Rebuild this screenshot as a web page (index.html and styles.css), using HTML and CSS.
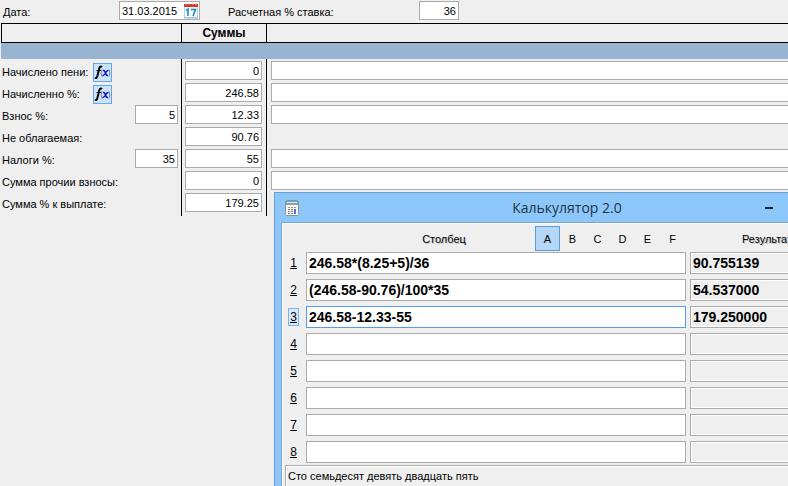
FILE: index.html
```html
<!DOCTYPE html>
<html lang="ru">
<head>
    <meta charset="UTF-8">
    <meta name="viewport" content="width=device-width, initial-scale=1.0">
    <title>Калькулятор 2.0</title>
    <link rel="stylesheet" href="styles.css">
</head>
<body>
    <form class="top-bar">
        <label class="date-label" for="date">Дата:</label>
        <div class="date-box">
            <input class="date-input" id="date" type="text" value="31.03.2015">
            <button class="date-button" type="button" aria-label="Календарь">
                <svg width="16" height="17" viewBox="0 0 16 17">
                    <rect x="1.5" y="3.500" width="13" height="12" fill="#f2f8fc" stroke="#b4d3e6"/>
                    <path d="M1 16h14" stroke="#8fb6cc"/>
                    <rect x="1" y="2" width="14" height="3" fill="#d23a28"/>
                    <path d="M3 1v2M6 1v2M10 1v2M13 1v2" stroke="#e9b5ae"/>
                    <path d="M3 8.500L5 7V14M8 7.500H12.500L10 14" fill="none" stroke="#1f86bd" stroke-width="1.500"/>
                </svg>
            </button>
        </div>
        <label class="rate-label" for="rate">Расчетная % ставка:</label>
        <input class="field rate-input" id="rate" type="text" value="36">
    </form>

    <table class="sums">
        <thead>
            <tr>
                <th class="col-name"></th>
                <th class="col-sum">Суммы</th>
                <th></th>
            </tr>
            <tr class="band">
                <td colspan="3"></td>
            </tr>
        </thead>
        <tbody>
            <tr>
                <td>
                    <div class="name">
                        <label for="peni">Начислено пени:</label>
                        <button class="fx" type="button" aria-label="Формула пени"><svg width="17" height="17" viewBox="0 0 17 17"><use href="#fx"/></svg></button>
                    </div>
                </td>
                <td><input class="field" id="peni" type="text" value="0"></td>
                <td><input class="field note" type="text" aria-label="Примечание"></td>
            </tr>
            <tr>
                <td>
                    <div class="name">
                        <label for="percent">Начисленно %:</label>
                        <button class="fx" type="button" aria-label="Формула процентов"><svg width="17" height="17" viewBox="0 0 17 17"><use href="#fx"/></svg></button>
                    </div>
                </td>
                <td><input class="field" id="percent" type="text" value="246.58"></td>
                <td><input class="field note" type="text" aria-label="Примечание"></td>
            </tr>
            <tr>
                <td>
                    <div class="name">
                        <label for="fee">Взнос %:</label>
                        <input class="field small" id="fee" type="text" value="5">
                    </div>
                </td>
                <td><input class="field" type="text" value="12.33" aria-label="Сумма взноса"></td>
                <td><input class="field note" type="text" aria-label="Примечание"></td>
            </tr>
            <tr>
                <td><div class="name"><label for="free">Не облагаемая:</label></div></td>
                <td><input class="field" id="free" type="text" value="90.76"></td>
                <td></td>
            </tr>
            <tr>
                <td>
                    <div class="name">
                        <label for="tax">Налоги %:</label>
                        <input class="field small" id="tax" type="text" value="35">
                    </div>
                </td>
                <td><input class="field" type="text" value="55" aria-label="Сумма налога"></td>
                <td><input class="field note" type="text" aria-label="Примечание"></td>
            </tr>
            <tr>
                <td><div class="name"><label for="other">Сумма прочии взносы:</label></div></td>
                <td><input class="field" id="other" type="text" value="0"></td>
                <td><input class="field note" type="text" aria-label="Примечание"></td>
            </tr>
            <tr class="last">
                <td><div class="name"><label for="payout">Сумма % к выплате:</label></div></td>
                <td><input class="field" id="payout" type="text" value="179.25"></td>
                <td></td>
            </tr>
        </tbody>
    </table>

    <section class="calc">
        <header class="calc-title">
            <svg class="calc-icon" width="14" height="16" viewBox="0 0 14 16">
                <rect x=".5" y=".5" width="13" height="15" rx="1" fill="#f4f4f4" stroke="#8c9299"/>
                <rect x="1" y="1" width="12" height="4" fill="#6fa9bd"/>
                <path d="M2 2.500h10" stroke="#d3edf0"/>
                <path d="M3 7.500h8" stroke="#d9884a" stroke-dasharray="2 1"/>
                <path d="M3 9.500h5M3 11.500h5M3 13.500h5" stroke="#777" stroke-dasharray="2 1"/>
                <path d="M10 9v5" stroke="#4b78d0" stroke-width="2"/>
            </svg>
            <h1>Калькулятор 2.0</h1>
            <button class="minimize" type="button" aria-label="Свернуть"></button>
        </header>
        <div class="calc-body">
            <div class="calc-head">
                <span class="head-column">Столбец</span>
                <div class="tabs">
                    <button class="tab active" type="button">A</button>
                    <button class="tab" type="button">B</button>
                    <button class="tab" type="button">C</button>
                    <button class="tab" type="button">D</button>
                    <button class="tab" type="button">E</button>
                    <button class="tab" type="button">F</button>
                </div>
                <span class="head-result">Результат</span>
            </div>
            <div class="lines">
                <label for="l1"><u>1</u></label>
                <input class="expr" id="l1" type="text" value="246.58*(8.25+5)/36">
                <input class="result" type="text" value="90.755139" aria-label="Результат 1" readonly>
                <label for="l2"><u>2</u></label>
                <input class="expr" id="l2" type="text" value="(246.58-90.76)/100*35">
                <input class="result" type="text" value="54.537000" aria-label="Результат 2" readonly>
                <label class="current" for="l3"><u>3</u></label>
                <input class="expr selected" id="l3" type="text" value="246.58-12.33-55">
                <input class="result" type="text" value="179.250000" aria-label="Результат 3" readonly>
                <label for="l4"><u>4</u></label>
                <input class="expr" id="l4" type="text">
                <input class="result" type="text" aria-label="Результат 4" readonly>
                <label for="l5"><u>5</u></label>
                <input class="expr" id="l5" type="text">
                <input class="result" type="text" aria-label="Результат 5" readonly>
                <label for="l6"><u>6</u></label>
                <input class="expr" id="l6" type="text">
                <input class="result" type="text" aria-label="Результат 6" readonly>
                <label for="l7"><u>7</u></label>
                <input class="expr" id="l7" type="text">
                <input class="result" type="text" aria-label="Результат 7" readonly>
                <label for="l8"><u>8</u></label>
                <input class="expr" id="l8" type="text">
                <input class="result" type="text" aria-label="Результат 8" readonly>
            </div>
            <div class="words">Сто семьдесят девять двадцать пять</div>
        </div>
    </section>

    <svg class="defs" width="0" height="0">
        <symbol id="fx" viewBox="0 0 17 17">
            <path d="M8 3C6.500 1.500 5.500 3 5 5.500L3.500 11.500C3 14 2 14.500 1 13.500" fill="none" stroke="#000" stroke-width="2"/>
            <path d="M2.500 6.500h5" stroke="#000"/>
            <path d="M8 5.500q-2 3.500 0 7M15 5.500q2 3.500 0 7" fill="none" stroke="#85859a"/>
            <path d="M9 6.500q1.500-.5 2.500 2.500t2.500 2.500M14.500 6.500q-1.500-.5-3 2.500t-3 2.500" fill="none" stroke="#1414c8" stroke-width="1.500"/>
        </symbol>
    </svg>
</body>
</html>
```
FILE: styles.css
```css
* {
    box-sizing: border-box;
}
body {
    position: relative;
    margin: 0;
    height: 100vh;
    overflow: hidden;
    background-color: #efefef;
    color: #000;
    font-family: "Liberation Sans", Arial, sans-serif;
    font-size: 11px;
}
input, button {
    margin: 0;
    padding: 0;
    font-family: inherit;
    font-size: inherit;
    color: inherit;
    border-radius: 0;
}
.defs {
    position: absolute;
}
.top-bar {
    display: flex;
    align-items: flex-start;
    height: 23px;
    padding: 1px 0 0 3px;
}
.top-bar label {
    line-height: 22px;
}
.date-label {
    width: 116px;
}
.date-box {
    display: flex;
    align-items: center;
    width: 81px;
    height: 19px;
    background: white;
    border: 1px solid #ababab;
}
.date-input {
    flex: 1;
    min-width: 0;
    padding-left: 2px;
    border: none;
    background: none;
}
.date-button {
    width: 16px;
    height: 17px;
    border: none;
    background: none;
}
.date-button svg, .fx svg {
    display: block;
}
.rate-label {
    width: 191px;
    margin-left: 28px;
}
.field {
    display: block;
    width: 77px;
    height: 19px;
    padding: 0 2px;
    background: white;
    border: 1px solid #ababab;
    text-align: right;
}
.rate-input {
    width: 40px;
}
.sums {
    width: calc(100% - 1px);
    margin-left: 1px;
    table-layout: fixed;
    border-collapse: separate;
    border-spacing: 0;
}
.sums th {
    height: 20px;
    padding: 0;
    font-size: 12px;
    border: 1px solid #000;
    border-right: none;
}
.col-name {
    width: 180px;
}
.col-sum {
    width: 85px;
}
.sums .band td {
    height: 16px;
    padding: 0;
    background-color: #99b4d1;
}
.sums tbody td {
    height: 22px;
    padding: 2px 0 1px 3px;
    border-left: 1px solid #000;
    vertical-align: top;
}
.sums tbody td:first-child {
    padding: 2px 3px 0 1px;
    border-left: none;
}
.sums tbody td:last-child {
    padding-left: 4px;
}
.sums .last td {
    height: 25px;
}
.name {
    display: flex;
    justify-content: space-between;
    height: 19px;
}
.name label {
    width: 91px;
    line-height: 22px;
    white-space: nowrap;
}
.small {
    width: 43px;
}
.fx {
    width: 19px;
    height: 19px;
    margin: 2px auto 0 0;
    background-color: #cce4fb;
    border: 1px solid #66a7e8;
}
.note {
    width: 100%;
    border-right: none;
    text-align: left;
}
.calc {
    position: absolute;
    top: 192px;
    left: 274px;
    width: 586px;
    padding: 0 6px 6px;
    background-color: #8dc7fa;
    border: 1px solid #6ba0d0;
}
.calc-title {
    display: flex;
    align-items: center;
    height: 29px;
}
.calc-icon {
    margin-left: 4px;
}
.calc-title h1 {
    flex: 1;
    margin: 0;
    padding-left: 70px;
    text-align: center;
    font-family: "Open Sans", sans-serif;
    font-size: 14px;
    font-weight: normal;
    color: #1e3448;
}
.minimize {
    width: 8px;
    height: 2px;
    margin-right: 80px;
    background: #1a2733;
    border: none;
}
.calc-body {
    padding: 2px 3px 3px;
    background-color: #efefef;
    border: 1px solid #78a9d6;
    box-shadow: inset 1px 1px #fff;
}
.calc-head {
    display: grid;
    grid-template-columns: 250px 150px 1fr;
    align-items: center;
    height: 27px;
    text-align: center;
}
.calc-head span {
    text-shadow: 1px 1px #c8c8c8;
}
.head-column {
    padding-left: 68px;
}
.tabs {
    display: flex;
}
.tab {
    width: 25px;
    height: 25px;
    background: none;
    border: 1px solid transparent;
}
.active {
    background-color: #b5d6f6;
    border-color: #5b9bd8;
}
.lines {
    display: grid;
    grid-template-columns: 17px 380px 1fr;
    gap: 5px 4px;
    align-items: center;
    padding-right: 6px;
}
.lines label {
    justify-self: center;
    padding: 1px;
    border: 1px solid transparent;
    font-size: 12px;
}
.lines .current {
    background-color: #d9eafb;
    border-color: #7db4ea;
}
.expr, .result {
    width: 100%;
    height: 22px;
    padding: 0 2px;
    background: white;
    border: 1px solid #ababab;
    font-size: 14px;
    font-weight: bold;
}
.result {
    background-color: #efefef;
    box-shadow: inset 0 0 0 1px #fff;
}
.selected {
    border-color: #569de5;
}
.words {
    height: 24px;
    margin-top: 2px;
    padding: 0 2px;
    border: 1px solid #ababab;
    box-shadow: inset 1px 1px #fff;
    line-height: 20px;
}
```
